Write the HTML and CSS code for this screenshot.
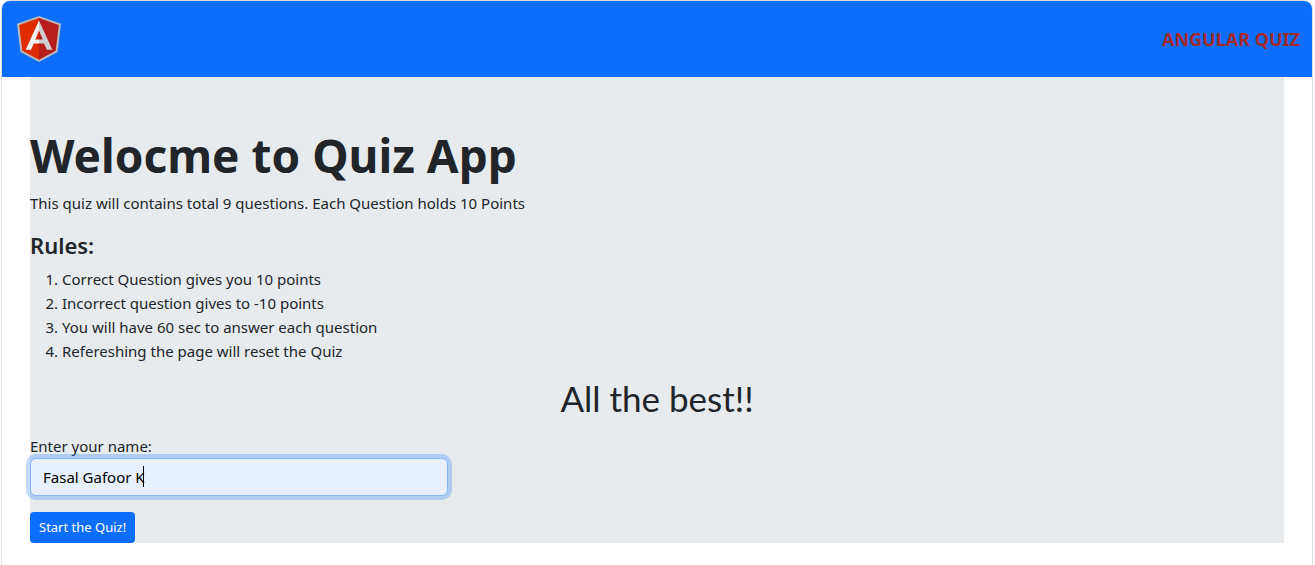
FILE: index.html
```html
<!DOCTYPE html>
<html lang="en">
<head>
<meta charset="utf-8">
<meta name="viewport" content="width=device-width, initial-scale=1">
<title>Angular Quiz</title>
<link rel="stylesheet" href="styles.css">
</head>
<body class="page">
<div class="card">
  <header class="card-header">
    <svg class="logo" viewBox="0 0 44 46" role="img" aria-label="Angular">
      <path fill="#b9b9b9" d="M22 0 0 7.8 3.4 36.1 22 46 40.6 36.1 44 7.8z"/>
      <path fill="#de2b00" d="M22 2 2.2 9.1 5.3 34.8 22 43.8z"/>
      <path fill="#b61d1d" d="M22 2 41.8 9.1 38.7 34.8 22 43.8z"/>
      <path fill="#f2f2f2" d="M22 4.6 8.7 33.8h5.4L16.8 27.4H22v-4h-3.6L22 14.6z"/>
      <path fill="#cfcfcf" d="M22 4.6 35.3 33.8h-5.4L27 27.4H22v-4h3.8L22 14.6z"/>
    </svg>
    <span class="brand">ANGULAR QUIZ</span>
  </header>
  <main class="card-body">
    <section class="welcome">
      <h1 class="title">Welocme to Quiz App</h1>
      <p class="intro">This quiz will contains total 9 questions. Each Question holds 10 Points</p>
      <h2 class="rules-title">Rules:</h2>
      <ol class="rules">
        <li>Correct Question gives you 10 points</li>
        <li>Incorrect question gives to -10 points</li>
        <li>You will have 60 sec to answer each question</li>
        <li>Refereshing the page will reset the Quiz</li>
      </ol>
      <p class="wish">All the best!!</p>
      <label class="label" for="name">Enter your name:</label>
      <div class="field">
        <input class="input" id="name" type="text" value="Fasal Gafoor K">
        <span class="caret" aria-hidden="true"></span>
      </div>
      <button class="button" type="button">Start the Quiz!</button>
    </section>
  </main>
</div>
</body>
</html>
```
FILE: styles.css
```css
* { box-sizing: border-box; }

.page {
  margin: 0;
  min-height: 100vh;
  display: flex;
  background: #fff;
  color: #212529;
  font: 15px/24px "Segoe UI", "Noto Sans", sans-serif;
}

.card {
  flex: 1;
  margin: 0 2px 0 1px;
  border: 1px solid #dfdfdf;
  border-bottom: 0;
  border-radius: 9px 9px 0 0;
  background: #fff;
}

.card-header {
  display: flex;
  align-items: center;
  justify-content: space-between;
  height: 76px;
  padding: 0 12px 0 15px;
  border-radius: 8px 8px 0 0;
  background: #0d6efd;
}

.logo { width: 44px; height: 46px; }

.brand {
  color: #a52a2a;
  font-size: 18px;
  font-weight: 700;
}

.card-body { padding: 0 28px; }

.welcome {
  padding-top: 48px;
  background: #e7ebee;
}

.title {
  margin: 0 0 6px;
  font-size: 46px;
  line-height: 60px;
  font-weight: 700;
}

.intro { margin: 0 0 16px; }

.rules-title {
  margin: 0 0 8px;
  font-size: 22px;
  line-height: 28px;
  font-weight: 600;
}

.rules {
  margin: 0 0 16px;
  padding-left: 32px;
}

.wish {
  margin: 0 0 16px;
  font-family: "Comic Sans MS", Lato, sans-serif;
  font-size: 35px;
  line-height: 39px;
  text-align: center;
}

.label { display: block; }

.field {
  position: relative;
  width: calc(100% / 3);
  margin-bottom: 16px;
}

.input {
  display: block;
  width: 100%;
  height: 38px;
  padding: 6px 12px;
  border: 1px solid #86b7fe;
  border-radius: 6px;
  outline: 0;
  background: #e8f0fe;
  box-shadow: 0 0 0 4px rgba(13, 110, 253, .25);
  color: #000;
  font: inherit;
}

.caret {
  position: absolute;
  left: 113px;
  top: 8px;
  width: 1px;
  height: 21px;
  background: #000;
}

.button {
  display: block;
  height: 31px;
  padding: 4px 9px;
  border: 0;
  border-radius: 4px;
  background: #0d6efd;
  color: #fff;
  font: 13px/21px "Segoe UI", "Noto Sans", sans-serif;
}
```
